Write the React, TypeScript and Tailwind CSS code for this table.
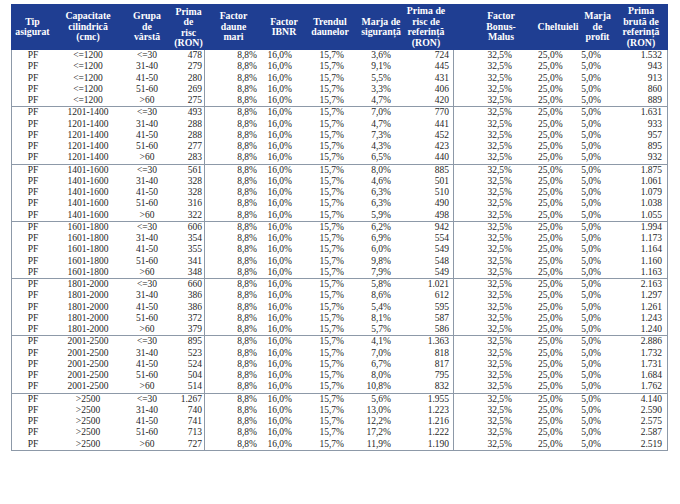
import React from "react";

type Row = [string, string, string, string, string];

const groups: { cap: string; rows: Row[] }[] = [
  { cap: "<=1200", rows: [
    ["<=30", "478", "3,6%", "724", "1.532"],
    ["31-40", "279", "9,1%", "445", "943"],
    ["41-50", "280", "5,5%", "431", "913"],
    ["51-60", "269", "3,3%", "406", "860"],
    [">60", "275", "4,7%", "420", "889"],
  ]},
  { cap: "1201-1400", rows: [
    ["<=30", "493", "7,0%", "770", "1.631"],
    ["31-40", "288", "4,7%", "441", "933"],
    ["41-50", "288", "7,3%", "452", "957"],
    ["51-60", "277", "4,3%", "423", "895"],
    [">60", "283", "6,5%", "440", "932"],
  ]},
  { cap: "1401-1600", rows: [
    ["<=30", "561", "8,0%", "885", "1.875"],
    ["31-40", "328", "4,6%", "501", "1.061"],
    ["41-50", "328", "6,3%", "510", "1.079"],
    ["51-60", "316", "6,3%", "490", "1.038"],
    [">60", "322", "5,9%", "498", "1.055"],
  ]},
  { cap: "1601-1800", rows: [
    ["<=30", "606", "6,2%", "942", "1.994"],
    ["31-40", "354", "6,9%", "554", "1.173"],
    ["41-50", "355", "6,0%", "549", "1.164"],
    ["51-60", "341", "9,8%", "548", "1.160"],
    [">60", "348", "7,9%", "549", "1.163"],
  ]},
  { cap: "1801-2000", rows: [
    ["<=30", "660", "5,8%", "1.021", "2.163"],
    ["31-40", "386", "8,6%", "612", "1.297"],
    ["41-50", "386", "5,4%", "595", "1.261"],
    ["51-60", "372", "8,1%", "587", "1.243"],
    [">60", "379", "5,7%", "586", "1.240"],
  ]},
  { cap: "2001-2500", rows: [
    ["<=30", "895", "4,1%", "1.363", "2.886"],
    ["31-40", "523", "7,0%", "818", "1.732"],
    ["41-50", "524", "6,7%", "817", "1.731"],
    ["51-60", "504", "8,0%", "795", "1.684"],
    [">60", "514", "10,8%", "832", "1.762"],
  ]},
  { cap: ">2500", rows: [
    ["<=30", "1.267", "5,6%", "1.955", "4.140"],
    ["31-40", "740", "13,0%", "1.223", "2.590"],
    ["41-50", "741", "12,2%", "1.216", "2.575"],
    ["51-60", "713", "17,2%", "1.222", "2.587"],
    [">60", "727", "11,9%", "1.190", "2.519"],
  ]},
];

function H({ w, children, extra = "" }: { w: string; children: React.ReactNode; extra?: string }) {
  return (
    <div className={`${w} shrink-0 flex items-center justify-center text-center whitespace-nowrap ${extra}`}>
      <div>{children}</div>
    </div>
  );
}

export default function App() {
  return (
    <div className="w-[680px] h-[504px] bg-white pt-[4px] pl-[11px]" style={{ fontFamily: '"Liberation Serif", "Times New Roman", serif' }}>
      <div className="w-[657px]">
        {/* header */}
        <div className="flex h-[46px] bg-[#1f3e92] text-white font-bold text-[9.8px] leading-[10.5px]">
          <H w="w-[43px]">Tip<br />asigurat</H>
          <H w="w-[68px]">Capacitate<br />cilindrică<br />(cmc)</H>
          <H w="w-[50px]">Grupa<br />de<br />vârstă</H>
          <H w="w-[33px]" extra="pt-[1px]">Prima<br />de<br />risc<br />(RON)</H>
          <H w="w-[57px]">Factor<br />daune<br />mari</H>
          <H w="w-[44px]">Factor<br />IBNR</H>
          <H w="w-[48px]">Trendul<br />daunelor</H>
          <H w="w-[50px]" extra="pl-[4px]">Marja de<br />siguranță</H>
          <H w="w-[50px]" extra="pr-[6px]">Prima de<br />risc de<br />referință<br />(RON)</H>
          <H w="w-[84px]" extra="pl-[10px]">Factor<br />Bonus-<br />Malus</H>
          <H w="w-[40px]">Cheltuieli</H>
          <H w="w-[39px]">Marja<br />de<br />profit</H>
          <H w="w-[51px]" extra="pr-[3px]">Prima<br />brută de<br />referință<br />(RON)</H>
        </div>
        {/* body */}
        <div className="border-x border-b border-[#8d99a8] text-[9.5px] text-[#262626] leading-[11.25px]">
          {groups.map((g, gi) => (
            <div key={gi} className={gi > 0 ? "border-t border-[#8d99a8]" : ""}>
              {g.rows.map((r, ri) => (
                <div key={ri} className="flex h-[11.25px]">
                  <div className="w-[42px] shrink-0 text-center">PF</div>
                  <div className="w-[68px] shrink-0 text-center">{g.cap}</div>
                  <div className="w-[50px] shrink-0 text-center">{r[0]}</div>
                  <div className="w-[33px] shrink-0 text-right pr-[2px] border-r border-[#8d99a8]">{r[1]}</div>
                  <div className="w-[57px] shrink-0 text-right pr-[5px]">8,8%</div>
                  <div className="w-[44px] shrink-0 text-right pr-[14px]">16,0%</div>
                  <div className="w-[48px] shrink-0 text-right pr-[10px]">15,7%</div>
                  <div className="w-[50px] shrink-0 text-right pr-[13px]">{r[2]}</div>
                  <div className="w-[50px] shrink-0 text-right pr-[4px] border-r border-[#8d99a8]">{r[3]}</div>
                  <div className="w-[84px] shrink-0 text-right pr-[26px]">32,5%</div>
                  <div className="w-[40px] shrink-0 text-right pr-[17px]">25,0%</div>
                  <div className="w-[39px] shrink-0 text-right pr-[16px]">5,0%</div>
                  <div className="w-[50px] shrink-0 text-right pr-[5px]">{r[4]}</div>
                </div>
              ))}
            </div>
          ))}
        </div>
      </div>
    </div>
  );
}
